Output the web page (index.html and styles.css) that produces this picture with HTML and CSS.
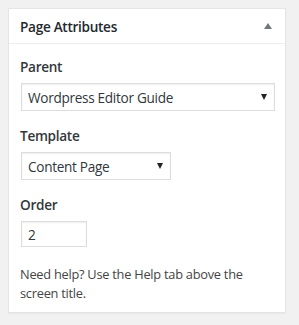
FILE: index.html
```html
<!DOCTYPE html>
<html lang="en">
<head>
  <meta charset="UTF-8" />
  <title>Page Attributes</title>
  <link rel="stylesheet" href="styles.css">
</head>
<body>
  <div class="postbox">
    <div class="hndle">
      <h2>Page Attributes</h2>
      <span class="toggle-up"></span>
    </div>

    <div class="inside">
      <p class="attr-label"><label for="parent_id">Parent</label></p>
      <div class="select-wrap wide">
        <select id="parent_id">
          <option>Wordpress Editor Guide</option>
        </select>
        <span class="caret"></span>
      </div>

      <p class="attr-label"><label for="page_template">Template</label></p>
      <div class="select-wrap narrow">
        <select id="page_template">
          <option>Content Page</option>
        </select>
        <span class="caret"></span>
      </div>

      <p class="attr-label"><label for="menu_order">Order</label></p>
      <input type="text" id="menu_order" class="order-input" value="2" />

      <p class="help">Need help? Use the Help tab above the screen title.</p>
    </div>
  </div>
</body>
</html>
```

FILE: styles.css
```css
body {
  margin: 0;
  padding: 8px 13px 12px 8px;
  background: #f1f1f1;
  font-family: "Open Sans", sans-serif;
  color: #23282d;
}

.postbox {
  background: #fff;
  border: 1px solid #e5e5e5;
  box-shadow: 0 1px 1px rgba(0,0,0,0.04);
}

.hndle {
  display: flex;
  align-items: center;
  justify-content: space-between;
  height: 34px;
  padding: 0 13px 0 11px;
  border-bottom: 1px solid #eee;
}

.hndle h2 {
  margin: 0;
  font-size: 13.6px;
  font-weight: 600;
  letter-spacing: -0.3px;
}

.toggle-up {
  width: 0;
  height: 0;
  border-left: 4px solid transparent;
  border-right: 4px solid transparent;
  border-bottom: 6px solid #72777c;
}

.inside {
  padding: 13px 12px 9px 11px;
}

.attr-label {
  margin: 0 0 6px;
  font-size: 13.6px;
  font-weight: 600;
  line-height: 20px;
  letter-spacing: -0.3px;
  color: #32373c;
}

.select-wrap {
  position: relative;
  margin: 0 0 15px 1px;
}

.wide { width: 254px; }
.narrow { width: 150px; }

select {
  -webkit-appearance: none;
  appearance: none;
  width: 100%;
  height: 28px;
  padding: 0 24px 0 6px;
  border: 1px solid #ddd;
  border-radius: 0;
  background: #fff;
  box-shadow: inset 0 1px 2px rgba(0,0,0,0.07);
  font-family: "Open Sans", sans-serif;
  font-size: 13.6px;
  letter-spacing: -0.3px;
  color: #32373c;
}

.caret {
  position: absolute;
  right: 8px;
  top: 11px;
  width: 0;
  height: 0;
  border-left: 3px solid transparent;
  border-right: 3px solid transparent;
  border-top: 6px solid #222;
}

.order-input {
  display: block;
  box-sizing: border-box;
  width: 66px;
  height: 26px;
  margin: 0 0 18px 1px;
  padding: 0 6px;
  border: 1px solid #ddd;
  box-shadow: inset 0 1px 2px rgba(0,0,0,0.07);
  font-family: "Open Sans", sans-serif;
  font-size: 13.6px;
  color: #32373c;
}

.help {
  margin: 0;
  font-size: 12.8px;
  line-height: 19px;
  letter-spacing: -0.25px;
  color: #444;
}
```
